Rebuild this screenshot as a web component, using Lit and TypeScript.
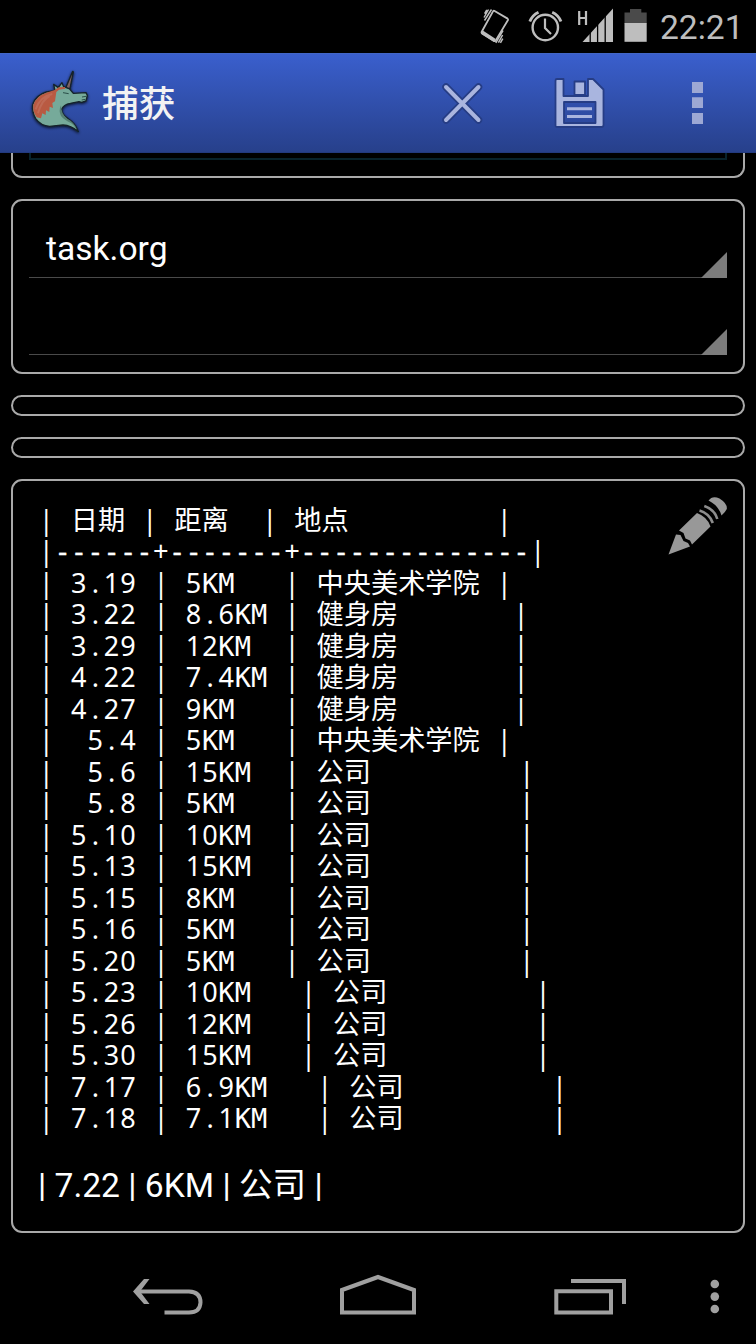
import { LitElement, html, css } from "lit";
import { customElement, property } from "lit/decorators.js";

const RULE = "|------+-------+--------------|";
const LOG: string[] = [
  "| 日期 | 距离  | 地点         |",
  RULE,
  "| 3.19 | 5KM   | 中央美术学院 |",
  "| 3.22 | 8.6KM | 健身房       |",
  "| 3.29 | 12KM  | 健身房       |",
  "| 4.22 | 7.4KM | 健身房       |",
  "| 4.27 | 9KM   | 健身房       |",
  "|  5.4 | 5KM   | 中央美术学院 |",
  "|  5.6 | 15KM  | 公司         |",
  "|  5.8 | 5KM   | 公司         |",
  "| 5.10 | 10KM  | 公司         |",
  "| 5.13 | 15KM  | 公司         |",
  "| 5.15 | 8KM   | 公司         |",
  "| 5.16 | 5KM   | 公司         |",
  "| 5.20 | 5KM   | 公司         |",
  "| 5.23 | 10KM   | 公司         |",
  "| 5.26 | 12KM   | 公司         |",
  "| 5.30 | 15KM   | 公司         |",
  "| 7.17 | 6.9KM   | 公司         |",
  "| 7.18 | 7.1KM   | 公司         |",
];

const kind = (t: string): string => {
  if (t[0] === "|") return "bar";
  if (t[0] === "+") return "plus";
  if (t[0] === ".") return "dot";
  if (/[0-9]/.test(t[0])) return "num";
  if (t[0] === "-") return "mono dash";
  if (/[A-Z ]/.test(t[0])) return "mono";
  return "han";
};

/* Org-mode table text on a 16.4px character cell. */
@customElement("org-line")
class OrgLine extends LitElement {
  @property() text = "";
  static styles = css`
    :host { display: block; height: 31.5px; line-height: 31.5px; white-space: pre; font-size: 27.3px; font-family: "Noto Sans", sans-serif; }
    span { line-height: 0; }
    .bar { font-size: 26.4px; padding: 0 0.93px; }
    .plus { padding: 0 0.39px; }
    .dot { padding: 0 4.52px; }
    .num { font-size: 27px; letter-spacing: 0.94px; margin-left: 0.3px; margin-right: -0.3px; }
    .mono { font-family: "DejaVu Sans Mono", monospace; font-size: 27px; letter-spacing: 0.13px; }
    .dash { -webkit-text-stroke: 0.4px #fff; }
    .han { font-family: "Noto Sans CJK SC", sans-serif; font-size: 27.2px; }
  `;
  render() {
    const parts = this.text.match(/\||\+|\.|[0-9]+|[A-Z]+|-+| +|[^\x00-\x7f]+/g) ?? [];
    return html`${parts.map((p) => html`<span class=${kind(p)}>${p}</span>`)}`;
  }
}

@customElement("status-bar")
class StatusBar extends LitElement {
  static styles = css`
    :host { display: flex; height: 53px; background: #000; justify-content: flex-end; align-items: center; padding-right: 13px; box-sizing: border-box; }
    svg { display: block; width: 180px; height: 53px; }
    .time { font: 33.6px/53px Roboto, sans-serif; color: #bebebe; margin-left: 11px; width: 83px; white-space: nowrap; padding-top: 1px; }
  `;
  render() {
    return html`
      <svg viewBox="469 0 180 53">
        <g fill="none" stroke="#bebebe">
          <path d="M494.2 10.8 L507.6 18.6 Q508.4 19.2 508 20 L495.6 40.6 Q495 41.4 494.2 41 L482 33.4 Q481.2 32.8 481.6 32 L493 11.4 Q493.4 10.4 494.2 10.8Z" stroke-width="1.8"/>
          <path d="M481.8 32 L494.8 40.6" stroke-width="3.6"/>
          <path d="M491.5 9.5 L484.5 20.5 M488.5 9.5 L484 17.5 M486.8 9.8 L484.6 13.6 M503 30.5 L495.8 42.8 M502.6 35 L498.4 42.6 M502.8 38.6 L500.4 42.8" stroke-width="1.5"/>
          <circle cx="545.3" cy="27.5" r="12.7" stroke-width="2.4"/>
          <path d="M545 18.5 V28 L551 34" stroke-width="2.2"/>
          <path d="M529.8 21.5 Q532.2 15.2 538.5 12.2 M561 21.5 Q558.6 15.2 552.2 12.2" stroke-width="2.8"/>
          <path d="M579.2 11 V25 M586 11 V25 M579.2 18 H586" stroke-width="2.2"/>
        </g>
        <path d="M582.5 42 L613 8.5 V42Z" fill="#bebebe"/>
        <path d="M590.2 30 V43 M597.6 20 V43 M605.2 12 V43" stroke="#000" stroke-width="1.3"/>
        <path d="M624.5 12.5 H630 V9 H641.3 V12.5 H646.7 V23.5 H624.5Z" fill="#4a4a4a"/>
        <path d="M624.5 23 H646.7 V41.8 H624.5Z" fill="#bebebe"/>
      </svg>
      <span class="time">22:21</span>`;
  }
}

@customElement("action-bar")
class ActionBar extends LitElement {
  static styles = css`
    :host { display: flex; height: 100px; box-sizing: border-box; align-items: center; background: linear-gradient(#3a5fcd, #27408b); border-top: 1px solid #4266c6; border-bottom: 1px solid #233a7e; }
    .logo { display: block; width: 66px; height: 74px; margin: -4px 0 0 26px; }
    .title { flex: 1; margin: -4px 0 0 10px; font: 500 36.8px/50px "Noto Sans CJK SC", sans-serif; color: #f3f3f3; }
    .actions { display: block; width: 336px; height: 98px; }
  `;
  render() {
    return html`
      <svg class="logo" viewBox="79 36 198 222">
        <defs><filter id="s" x="-20%" y="-20%" width="140%" height="140%"><feDropShadow dx="0" dy="3" stdDeviation="4" flood-color="#000" flood-opacity=".8"/></filter></defs>
        <g filter="url(#s)" stroke="#14222a" stroke-width="4" stroke-linejoin="round">
          <path d="M198 108 L219 58 L221 60 L211 110Z" fill="#7d6263"/>
          <path d="M166 116 L162 97 L175 106 L178 104 L187 92 L192 104 L210 111 L221 124 L259 122 L263 130 L259 147 L246 151 L238 149 L212 154 Q192 157 186 172 Q186 187 205 200 Q228 215 236 239 Q214 220 190 219 L150 223 Q124 222 108 200 Q96 178 99 158 Q108 130 140 120Z" fill="#76aa9a"/>
        </g>
        <path d="M165 114 L177 106 L196 105 L197 110 L178 113 L170 120 L166 148 L158 153 L160 168 L150 164 L149 180 L139 175 L138 189 L128 184 L124 199 L111 196 Q98 178 101 158 Q110 132 140 122Z" fill="#b95a42"/>
        <path d="M158 126 Q120 134 108 172 M150 132 Q126 144 115 184" fill="none" stroke="#c67a68" stroke-width="6" opacity=".5"/>
        <path d="M184 160 Q176 176 184 192 Q194 204 214 213 Q226 222 233 234 Q224 210 203 200 Q184 187 184 160Z" fill="#547f73"/>
        <path d="M190 122 L207 125 M247 135 L259 133 M246 144 L257 142" stroke="#294e48" stroke-width="3"/>
      </svg>
      <h1 class="title">捕获</h1>
      <svg class="actions" viewBox="420 54 336 98">
        <g stroke-linecap="round">
          <path d="M446 87 L478.5 120 M478.5 87 L446 120" stroke="#263d85" stroke-width="7.5"/>
          <path d="M446 87 L478.5 120 M478.5 87 L446 120" stroke="#aab5de" stroke-width="4"/>
        </g>
        <g stroke="#263d85" stroke-width="1.8" stroke-linejoin="round">
          <path fill-rule="evenodd" fill="#a9b5df" d="M557 79 H563.5 V96 H588 V79 H593 L603.5 89.5 V125 Q603.5 127 601.5 127 H557 Q555.5 127 555.5 125.5 V80.5 Q555.5 79 557 79Z M564 102 V123 H595.5 V102Z"/>
          <path fill="#a9b5df" d="M574.5 81.5 H585 V95 H574.5Z"/>
        </g>
        <path d="M567 108.8 H592 M567 116.5 H592" stroke="#a9b5df" stroke-width="3"/>
        <path d="M692 82 H703 V93 H692Z M692 97.3 H703 V108 H692Z M692 113 H703 V124 H692Z" fill="#9da8d4"/>
      </svg>`;
  }
}

@customElement("app-root")
class AppRoot extends LitElement {
  static styles = css`
    :host { display: flex; flex-direction: column; height: 1344px; width: 756px; overflow: hidden; background: #000; color: #fff; font-family: Roboto, "Noto Sans CJK SC", sans-serif; }
    .body { flex: 1; padding: 0 11px; display: flex; flex-direction: column; gap: 21px; }
    .card { border: 2px solid #a9a9a9; border-radius: 11px; box-sizing: border-box; }
    .first { height: 25px; border-top: 0; border-radius: 0 0 11px 11px; padding: 0 16px; }
    .focus { height: 7px; box-sizing: border-box; border: 2px solid #08222b; border-top: 0; }
    .picker { height: 175px; padding: 0 16px; }
    .spin { height: 77px; box-sizing: border-box; border-bottom: 1px solid #4a4a4a; display: flex; justify-content: space-between; align-items: flex-end; font-size: 33.6px; }
    .spin span { line-height: 40px; padding: 0 0 8px 17px; }
    .tri { width: 26px; height: 26px; background: #7c7c7c; clip-path: polygon(100% 0, 100% 100%, 0 100%); margin-bottom: -1px; }
    .thin { height: 21px; }
    .note { height: 754px; padding: 22.5px 15px 0 25px; display: flex; justify-content: space-between; }
    .extra { font-size: 33.6px; line-height: 42px; padding-top: 31.5px; white-space: pre; }
    .pencil { display: block; width: 64px; height: 66px; margin-top: -10.5px; }
    .nav { display: block; width: 756px; height: 94px; }
  `;
  render() {
    return html`
      <status-bar></status-bar>
      <action-bar></action-bar>
      <main class="body">
        <section class="card first"><div class="focus"></div></section>
        <section class="card picker">
          <div class="spin"><span>task.org</span><i class="tri"></i></div>
          <div class="spin"><span></span><i class="tri"></i></div>
        </section>
        <section class="card thin"></section>
        <section class="card thin"></section>
        <section class="card note">
          <div>
            ${LOG.map((l) => html`<org-line .text=${l}></org-line>`)}
            <div class="extra">| 7.22 | 6KM | 公司 |</div>
          </div>
          <svg class="pencil" viewBox="664.5 493 64 66">
            <g fill="#989898">
              <path d="M669 554.5 L676.5 534.5 L681 535 L684 541 L688.5 543 L690.5 546.5Z"/>
              <path d="M679.5 530.5 L697.5 513 Q708 517 711 526.5 L692.5 544.5 L690.5 540.5 L686 538.5 L684 533Z"/>
              <path d="M709 500.5 Q713 495 720 498.5 Q728 503.5 727.3 509 Q726 512 722 515.5 Q719 505.5 709 500.5Z"/>
            </g>
            <path d="M700 510.5 Q710 513.5 713.3 523 M704.8 506 Q715 509.5 717.8 519" fill="none" stroke="#8d8d8d" stroke-width="2.6"/>
          </svg>
        </section>
      </main>
      <svg class="nav" viewBox="0 1250 756 94" fill="none" stroke="#a0a0a0" stroke-width="4">
        <path d="M138 1291.5 H189 Q200.5 1292 200.5 1302.5 Q200 1312.5 189 1312.5 H164.5"/>
        <path d="M149.5 1279 H144 L133 1291.5 L144 1304 H149.5 L140 1291.5Z" fill="#a0a0a0" stroke="none"/>
        <path d="M342 1290 L378 1277 L414 1290 V1312.5 H342Z"/>
        <path d="M556.3 1291.3 H611 V1312.5 H556.3Z M571 1281 H624 V1304"/>
        <g fill="#a0a0a0" stroke="none"><circle cx="714.8" cy="1284" r="4.3"/><circle cx="714.8" cy="1296.6" r="4.3"/><circle cx="714.8" cy="1309" r="4.3"/></g>
      </svg>`;
  }
}
